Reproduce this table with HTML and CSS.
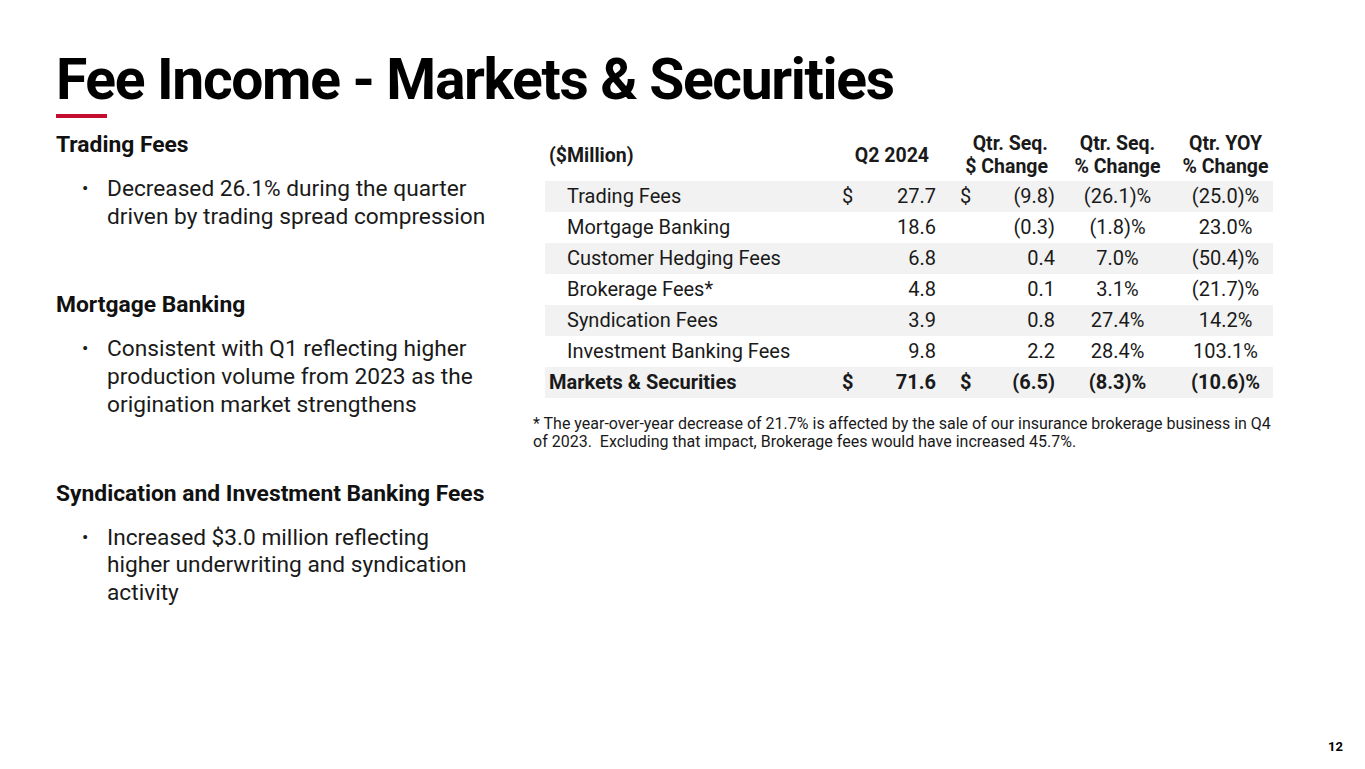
FILE: index.html
```html
<!DOCTYPE html>
<html lang="en">
<head>
<meta charset="utf-8">
<title>Fee Income - Markets &amp; Securities</title>
<link rel="stylesheet" href="styles.css">
</head>
<body>
<div class="slide">
  <h1 class="title">Fee Income - Markets &amp; Securities</h1>
  <div class="rule"></div>
  <div class="content">
    <div class="left">
      <section class="sec">
        <h2 class="sec-head">Trading Fees</h2>
        <ul class="bullets">
          <li>Decreased 26.1% during the quarter driven by trading spread compression</li>
        </ul>
      </section>
      <section class="sec">
        <h2 class="sec-head">Mortgage Banking</h2>
        <ul class="bullets">
          <li>Consistent with Q1 reflecting higher production volume from 2023 as the origination market strengthens</li>
        </ul>
      </section>
      <section class="sec">
        <h2 class="sec-head">Syndication and Investment Banking Fees</h2>
        <ul class="bullets">
          <li>Increased $3.0 million reflecting higher underwriting and syndication activity</li>
        </ul>
      </section>
    </div>
    <div class="right">
      <table class="fees">
        <colgroup>
          <col class="c-label">
          <col class="c-cur">
          <col class="c-val">
          <col class="c-cur2">
          <col class="c-chg">
          <col class="c-pct">
          <col class="c-yoy">
        </colgroup>
        <thead>
          <tr>
            <th class="h-label">($Million)</th>
            <th class="h-num" colspan="2">Q2 2024</th>
            <th class="h-num h-num2" colspan="2">Qtr. Seq.<br>$ Change</th>
            <th class="h-pct">Qtr. Seq.<br>% Change</th>
            <th class="h-yoy">Qtr. YOY<br>% Change</th>
          </tr>
        </thead>
        <tbody>
          <tr class="shade">
            <td class="lbl">Trading Fees</td><td class="cur">$</td><td class="val">27.7</td><td class="cur2">$</td><td class="chg">(9.8)</td><td class="pct">(26.1)%</td><td class="yoy">(25.0)%</td>
          </tr>
          <tr>
            <td class="lbl">Mortgage Banking</td><td class="cur"></td><td class="val">18.6</td><td class="cur2"></td><td class="chg">(0.3)</td><td class="pct">(1.8)%</td><td class="yoy">23.0%</td>
          </tr>
          <tr class="shade">
            <td class="lbl">Customer Hedging Fees</td><td class="cur"></td><td class="val">6.8</td><td class="cur2"></td><td class="chg">0.4</td><td class="pct">7.0%</td><td class="yoy">(50.4)%</td>
          </tr>
          <tr>
            <td class="lbl">Brokerage Fees*</td><td class="cur"></td><td class="val">4.8</td><td class="cur2"></td><td class="chg">0.1</td><td class="pct">3.1%</td><td class="yoy">(21.7)%</td>
          </tr>
          <tr class="shade">
            <td class="lbl">Syndication Fees</td><td class="cur"></td><td class="val">3.9</td><td class="cur2"></td><td class="chg">0.8</td><td class="pct">27.4%</td><td class="yoy">14.2%</td>
          </tr>
          <tr>
            <td class="lbl">Investment Banking Fees</td><td class="cur"></td><td class="val">9.8</td><td class="cur2"></td><td class="chg">2.2</td><td class="pct">28.4%</td><td class="yoy">103.1%</td>
          </tr>
          <tr class="shade total">
            <td class="lbl">Markets &amp; Securities</td><td class="cur">$</td><td class="val">71.6</td><td class="cur2">$</td><td class="chg">(6.5)</td><td class="pct">(8.3)%</td><td class="yoy">(10.6)%</td>
          </tr>
        </tbody>
      </table>
      <p class="footnote">* The year-over-year decrease of 21.7% is affected by the sale of our insurance brokerage business in Q4 of 2023.&nbsp; Excluding that impact, Brokerage fees would have increased 45.7%.</p>
    </div>
  </div>
  <div class="pagenum">12</div>
</div>
</body>
</html>
```
FILE: styles.css
```css
* { box-sizing: border-box; }
html, body { margin: 0; padding: 0; background: #fff; }
body { font-family: Roboto, "Liberation Sans", Arial, sans-serif; color: #1a1a1a; }

.slide {
  width: 1365px;
  height: 769px;
  padding: 51px 22px 0 56px;
  display: flex;
  flex-direction: column;
  overflow: hidden;
}

.title {
  margin: 0;
  font-size: 57px;
  line-height: 57px;
  font-weight: 700;
  color: #000;
  letter-spacing: -1.35px;
}

.rule {
  width: 51px;
  height: 4px;
  background: #c40d2f;
  margin-top: 6px;
}

.content {
  display: flex;
  margin-top: 13px;
}

.left {
  width: 440px;
  flex: none;
}

.sec + .sec { margin-top: 61px; }

.sec-head {
  margin: 0;
  font-size: 22.8px;
  line-height: 28px;
  font-weight: 700;
  color: #111;
}

.bullets {
  list-style: none;
  margin: 16px 0 0 0;
  padding: 0 0 0 51px;
}

.bullets li {
  position: relative;
  font-size: 22.7px;
  line-height: 27.7px;
  color: #1a1a1a;
}

.bullets li::before {
  content: "\2022";
  position: absolute;
  left: -25px;
  top: 0;
  font-size: 19px;
}

.right {
  width: 742px;
  flex: none;
  margin-left: 37px;
}

.fees {
  margin-left: 12px;
  border-collapse: collapse;
  table-layout: fixed;
  width: 728px;
  font-size: 20px;
  color: #1a1a1a;
}

.c-label { width: 297px; }
.c-cur { width: 18px; }
.c-val { width: 86px; }
.c-cur2 { width: 30px; }
.c-chg { width: 87px; }
.c-pct { width: 109px; }
.c-yoy { width: 101px; }

.fees th {
  font-weight: 700;
  font-size: 19.5px;
  line-height: 23px;
  padding: 1px 0 3px 0;
  vertical-align: middle;
  white-space: nowrap;
}

.h-label { text-align: left; padding-left: 4px !important; }
.h-num { text-align: right; padding-right: 17px !important; }
.h-num2 { padding-right: 15px !important; }
.h-pct { text-align: center; }
.h-yoy { text-align: center; padding-left: 6px !important; }

.fees td {
  height: 31px;
  padding: 0;
  line-height: 31px;
  white-space: nowrap;
}

.shade td { background: #f2f2f2; }

.lbl { padding-left: 22px !important; }
.cur { text-align: left; }
.val { text-align: right; padding-right: 10px !important; }
.cur2 { text-align: left; padding-left: 14px !important; }
.chg { text-align: right; padding-right: 8px !important; }
.pct { text-align: center; }
.yoy { text-align: center; padding-left: 6px !important; }

.total td { font-weight: 700; }
.total .lbl { padding-left: 4px !important; }

.footnote {
  margin: 17px 0 0 0;
  font-size: 16px;
  line-height: 18px;
  color: #1a1a1a;
}

.pagenum {
  margin-top: auto;
  margin-bottom: 14px;
  align-self: flex-end;
  font-size: 13px;
  font-weight: 700;
  line-height: 16px;
  color: #000;
}
```
